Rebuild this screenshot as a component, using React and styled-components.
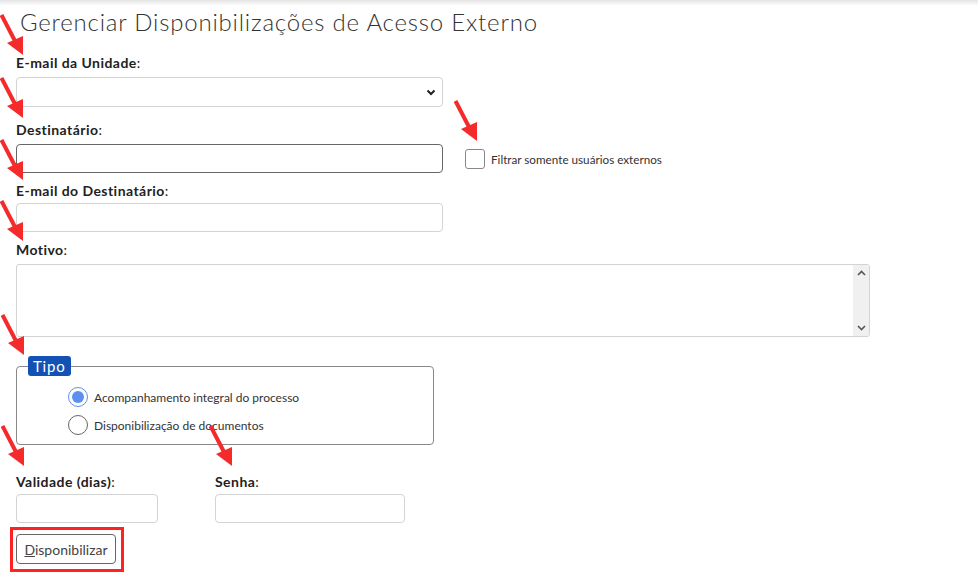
import React from "react";
import styled, { createGlobalStyle } from "styled-components";

const Global = createGlobalStyle`
  html, body { margin: 0; padding: 0; background: #fff; }
  body { font-family: "Lato", "Open Sans", sans-serif; color: #333; }
  * { box-sizing: border-box; }
`;

const Page = styled.div`
  position: relative;
  width: 978px;
  height: 578px;
  overflow: hidden;
  background: #fff;
`;

const TopShade = styled.div`
  height: 6px;
  background: linear-gradient(to bottom, #e4e4e4, #ffffff);
`;

const Title = styled.h1`
  margin: 0 0 0 20px;
  font-size: 24px;
  font-weight: 300;
  line-height: 32px;
  color: #333;
  letter-spacing: 0.8px;
`;

const Form = styled.form`
  display: flex;
  flex-direction: column;
  padding-left: 16px;
`;

const Group = styled.div`
  display: flex;
  flex-direction: column;
  margin-top: ${(p) => p.$mt || 0}px;
`;

const Label = styled.label`
  font-size: 14px;
  font-weight: 700;
  line-height: 20px;
  color: #222;
  margin-bottom: ${(p) => p.$mb ?? 4}px;
  letter-spacing: 0.45px;
  span { font-weight: 400; }
`;

const Row = styled.div`
  display: flex;
  align-items: center;
`;

const Select = styled.div`
  width: 427px;
  height: 30px;
  border: 1px solid #d3d3d3;
  border-radius: 4px;
  display: flex;
  align-items: center;
  justify-content: flex-end;
  padding-right: 6px;
  background: #fff;
`;

const Input = styled.input`
  width: ${(p) => p.$w}px;
  height: ${(p) => p.$h || 29}px;
  border: 1px solid ${(p) => (p.$dark ? "#666" : "#d3d3d3")};
  border-radius: 4px;
  outline: none;
  background: #fff;
  padding: 0 8px;
  font: inherit;
`;

const TextArea = styled.div`
  width: 854px;
  height: 73px;
  border: 1px solid #d3d3d3;
  border-radius: 3px;
  display: flex;
  justify-content: flex-end;
  overflow: hidden;
`;

const ScrollBar = styled.div`
  width: 16px;
  background: #f0f0f0;
  display: flex;
  flex-direction: column;
  justify-content: space-between;
  align-items: center;
  padding: 5px 0;
`;

const CheckWrap = styled.label`
  display: flex;
  align-items: center;
  margin-left: 22px;
  font-size: 11.7px;
  color: #333;
  gap: 6px;
`;

const CheckBox = styled.span`
  width: 20px;
  height: 20px;
  border: 1px solid #888;
  border-radius: 3px;
  background: #fff;
`;

const Fieldset = styled.fieldset`
  width: 418px;
  margin: ${(p) => p.$mt}px 0 0 0;
  padding: 11px 0 9px 51px;
  border: 1px solid #888;
  border-radius: 4px;
  display: flex;
  flex-direction: column;
  gap: 8px;
`;

const Legend = styled.legend`
  background: #1351b4;
  color: #fff;
  font-size: 15px;
  line-height: 20px;
  padding: 0 5px;
  margin-left: -40px;
  border-radius: 3px;
  letter-spacing: 0.8px;
`;

const RadioRow = styled.label`
  display: flex;
  align-items: center;
  gap: 6px;
  font-size: 12px;
  color: #333;
`;

const Radio = styled.span`
  width: 20px;
  height: 20px;
  border-radius: 50%;
  border: 1px solid ${(p) => (p.$checked ? "#5b8ff0" : "#666")};
  background: #fff;
  display: flex;
  align-items: center;
  justify-content: center;
  &::after {
    content: "";
    width: 12px;
    height: 12px;
    border-radius: 50%;
    background: ${(p) => (p.$checked ? "#5b8ff0" : "transparent")};
  }
`;

const BottomRow = styled.div`
  display: flex;
  gap: 57px;
  margin-top: 27px;
`;

const ButtonBox = styled.div`
  margin-top: 11px;
  display: flex;
`;

const Button = styled.button`
  width: 100px;
  height: 30px;
  border: 1px solid #666;
  border-radius: 4px;
  background: #fff;
  color: #444;
  font-family: inherit;
  font-size: 14px;
  padding: 0;
  u { text-decoration: underline; }
`;

const Highlight = styled.div`
  position: absolute;
  left: 10px;
  top: 527px;
  width: 114px;
  height: 45px;
  border: 3px solid #f22;
  pointer-events: none;
`;

const ArrowSvg = styled.svg`
  position: absolute;
  pointer-events: none;
`;

function Arrow({ tx, ty }) {
  return (
    <ArrowSvg
      width="26"
      height="44"
      viewBox="0 0 26 44"
      style={{ left: tx - 23, top: ty - 42 }}
    >
      <line x1="1.5" y1="2" x2="15" y2="28" stroke="#f52a2a" strokeWidth="4" />
      <polygon points="23,42 7,30 23,23" fill="#f52a2a" />
    </ArrowSvg>
  );
}

const Chevron = ({ up }) => (
  <svg width="9" height="6" viewBox="0 0 9 6">
    <path
      d={up ? "M1 5 L4.5 1.5 L8 5" : "M1 1 L4.5 4.5 L8 1"}
      fill="none"
      stroke="#555"
      strokeWidth="1.6"
    />
  </svg>
);

export default function App() {
  return (
    <>
      <Global />
      <Page>
        <TopShade />
        <Title>Gerenciar Disponibilizações de Acesso Externo</Title>
        <Form>
          <Group $mt={15}>
            <Label>E-mail da Unidade<span>:</span></Label>
            <Select>
              <svg width="10" height="7" viewBox="0 0 10 7">
                <path d="M1.5 1.5 L5 5 L8.5 1.5" fill="none" stroke="#222" strokeWidth="2" />
              </svg>
            </Select>
          </Group>
          <Group $mt={13}>
            <Label $mb={4}>Destinatário<span>:</span></Label>
            <Row>
              <Input $w={427} $dark />
              <CheckWrap>
                <CheckBox />
                Filtrar somente usuários externos
              </CheckWrap>
            </Row>
          </Group>
          <Group $mt={8}>
            <Label $mb={2}>E-mail do Destinatário<span>:</span></Label>
            <Input $w={427} />
          </Group>
          <Group $mt={8}>
            <Label $mb={4}>Motivo<span>:</span></Label>
            <TextArea>
              <ScrollBar>
                <Chevron up />
                <Chevron />
              </ScrollBar>
            </TextArea>
          </Group>
          <Fieldset $mt={19}>
            <Legend>Tipo</Legend>
            <RadioRow>
              <Radio $checked />
              Acompanhamento integral do processo
            </RadioRow>
            <RadioRow>
              <Radio />
              Disponibilização de documentos
            </RadioRow>
          </Fieldset>
          <BottomRow>
            <Group>
              <Label $mb={2}>Validade (dias)<span>:</span></Label>
              <Input $w={142} />
            </Group>
            <Group>
              <Label $mb={2}>Senha<span>:</span></Label>
              <Input $w={190} />
            </Group>
          </BottomRow>
          <ButtonBox>
            <Button type="button"><u>D</u>isponibilizar</Button>
          </ButtonBox>
        </Form>
        <Highlight />
        <Arrow tx={23} ty={55} />
        <Arrow tx={23} ty={118} />
        <Arrow tx={23} ty={180} />
        <Arrow tx={23} ty={241} />
        <Arrow tx={24} ty={355} />
        <Arrow tx={24} ty={466} />
        <Arrow tx={232} ty={466} />
        <Arrow tx={477} ty={141} />
      </Page>
    </>
  );
}
